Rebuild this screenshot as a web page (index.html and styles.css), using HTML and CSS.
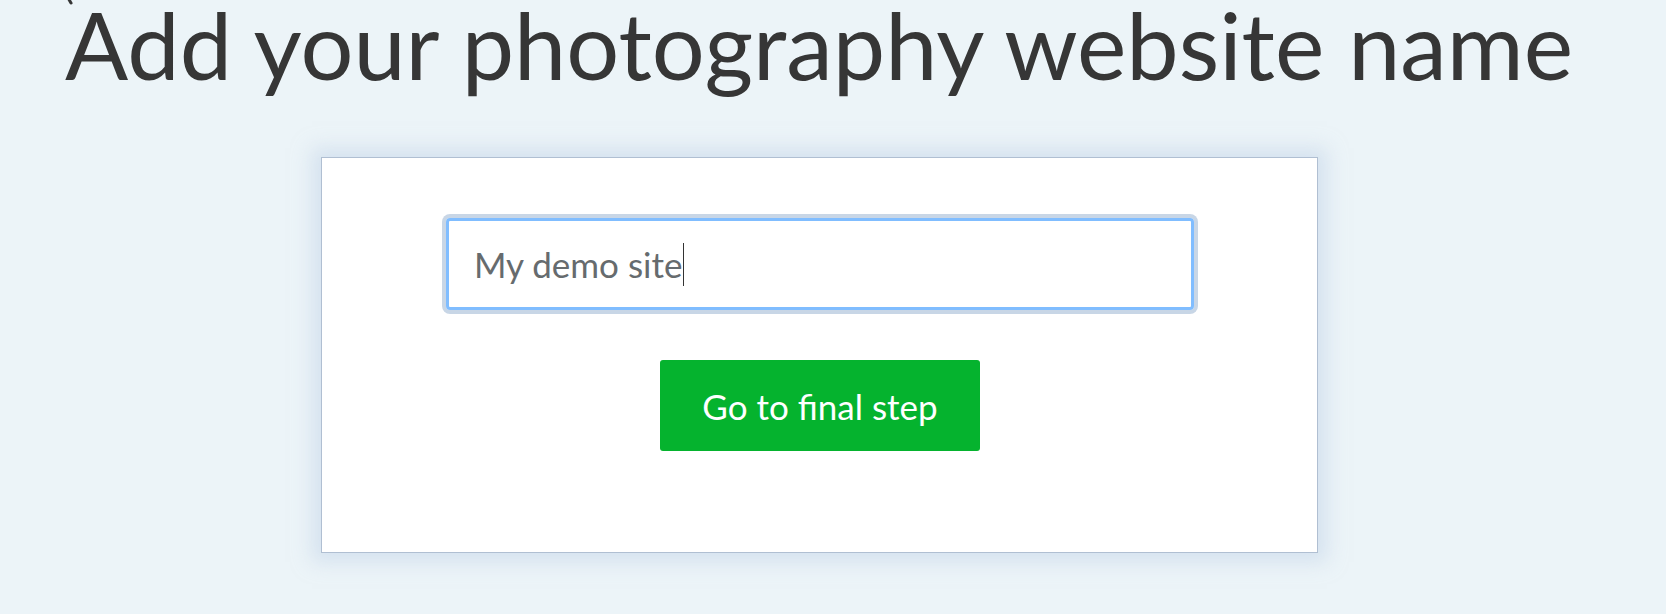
FILE: index.html
```html
<!DOCTYPE html>
<html lang="en">
<head>
<meta charset="utf-8">
<title>Add your photography website name</title>
<link rel="stylesheet" href="styles.css">
</head>
<body>
<main class="page">
  <svg class="back-tip" width="14" height="6" viewBox="0 0 14 6" aria-hidden="true"><path d="M2 -4 L6 3" stroke="#363636" stroke-width="3" stroke-linecap="round" fill="none"/></svg>
  <h1 class="title">Add your photography website name</h1>
  <section class="card">
    <div class="field"><span class="field-text">My demo site</span><span class="caret"></span></div>
    <div class="actions">
      <button class="btn" type="button">Go to final step</button>
    </div>
  </section>
</main>
</body>
</html>
```
FILE: styles.css
```css
html, body {
  margin: 0;
  padding: 0;
}
body {
  background: #ecf4f8;
  font-family: Lato, "Open Sans", sans-serif;
  width: 1666px;
  height: 614px;
  overflow: hidden;
}
.page {
  display: flex;
  flex-direction: column;
  align-items: flex-start;
  padding-left: 65px;
}
.back-tip {
  display: block;
  height: 6px;
  margin-bottom: -6px;
}
.title {
  margin: 0;
  font-weight: 400;
  font-size: 93.5px;
  line-height: 89px;
  color: #363636;
  white-space: nowrap;
}
.card {
  margin-top: 68px;
  margin-left: 256px;
  box-sizing: border-box;
  width: 997px;
  height: 396px;
  background: #fff;
  border: 1px solid #b0bfd2;
  box-shadow: 0 0 18px 9px rgba(192, 210, 232, 0.5);
  padding: 60px 123px 0 124px;
  display: flex;
  flex-direction: column;
}
.field {
  box-sizing: border-box;
  height: 92px;
  border: 3px solid #80bdff;
  border-radius: 4px;
  box-shadow: 0 0 0 4px #c8d6e6;
  padding-left: 25px;
  display: flex;
  align-items: center;
  font-size: 35px;
  color: #666b6e;
}
.caret {
  display: inline-block;
  width: 1px;
  height: 43px;
  background: #333;
  margin-left: 1px;
}
.actions {
  margin-top: 50px;
  padding-left: 214px;
  display: flex;
}
.btn {
  width: 320px;
  height: 91px;
  border: 0;
  border-radius: 3px;
  background: #05b32e;
  color: #fff;
  font-family: Lato, "Open Sans", sans-serif;
  font-size: 35px;
  padding: 0;
}
```
